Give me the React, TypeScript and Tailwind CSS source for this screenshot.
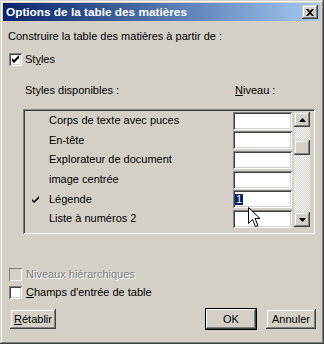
const raised =
  "shadow-[inset_-1px_-1px_0_#404040,inset_1px_1px_0_#d4d0c8,inset_-2px_-2px_0_#808080,inset_2px_2px_0_#ffffff]";
const sunken =
  "shadow-[inset_1px_1px_0_#808080,inset_-1px_-1px_0_#ffffff,inset_2px_2px_0_#404040,inset_-2px_-2px_0_#d4d0c8]";

const styles = [
  { name: "Corps de texte avec puces" },
  { name: "En-tête" },
  { name: "Explorateur de document" },
  { name: "image centrée" },
  { name: "Légende", used: true, level: "1" },
  { name: "Liste à numéros 2" },
];

function CheckBox({ checked, disabled }: { checked?: boolean; disabled?: boolean }) {
  return (
    <div
      className={`w-[13px] h-[13px] shrink-0 ${
        disabled
          ? "bg-[#d4d0c8] shadow-[inset_1px_1px_0_#808080,inset_-1px_-1px_0_#ffffff]"
          : "bg-white " + sunken
      }`}
    >
      {checked && (
        <svg width="13" height="13" viewBox="0 0 13 13">
          <path d="M3 5 L5 7 L10 2 L10 5 L5 10 L3 8 Z" fill="#000" />
        </svg>
      )}
    </div>
  );
}

function Arrow({ up }: { up?: boolean }) {
  return (
    <div className={`w-[16px] h-[15px] bg-[#d4d0c8] flex items-center justify-center ${raised}`}>
      <svg width="7" height="4" viewBox="0 0 7 4">
        {up ? <path d="M3.5 0 L7 4 L0 4 Z" fill="#000" /> : <path d="M0 0 L7 0 L3.5 4 Z" fill="#000" />}
      </svg>
    </div>
  );
}

export default function App() {
  return (
    <div
      className={`relative w-[324px] h-[344px] bg-[#d4d0c8] pt-[3px] pl-[3px] pr-[4px] font-['Liberation_Sans',Arial,sans-serif] text-[11px] leading-[13px] text-black select-none ${raised}`}
    >
      {/* title bar */}
      <div className="h-[18px] flex items-center pl-[3px] bg-gradient-to-r from-[#0a246a] to-[#a6caf0]">
        <span className="text-white font-bold text-[11.8px]">Options de la table des matières</span>
        <div className={`ml-auto mr-[2px] w-[16px] h-[14px] bg-[#d4d0c8] flex items-center justify-center ${raised}`}>
          <svg width="8" height="7" viewBox="0 0 8 7">
            <path d="M0 0 H2 L4 2 L6 0 H8 L5 3.5 L8 7 H6 L4 5 L2 7 H0 L3 3.5 Z" fill="#000" />
          </svg>
        </div>
      </div>

      <div className="ml-[5px] w-[308px]">
        <div className="mt-[8.5px]">Construire la table des matières à partir de :</div>

        <div className="mt-[10.5px] ml-[1px] flex items-center gap-[3px] h-[13px]">
          <CheckBox checked />
          <span>
            St<span className="underline">y</span>les
          </span>
        </div>

        <div className="mt-[17.5px] flex">
          <span className="ml-[17px] w-[210px]">Styles disponibles :</span>
          <span>
            <span className="underline">N</span>iveau :
          </span>
        </div>

        {/* list */}
        <div className={`mt-[12.5px] ml-[15px] w-[292px] h-[125px] p-[2px] flex ${sunken}`}>
          <div className="flex-1 flex flex-col">
            {styles.map((s) => (
              <div key={s.name} className="h-[19.6px] flex items-center">
                <div className="w-[24px] pl-[7px]">
                  {s.used && (
                    <svg width="8" height="7" viewBox="0 0 8 7">
                      <path d="M0 3 L2 5 L7 0 L7 2.5 L2 7 L0 5 Z" fill="#000" />
                    </svg>
                  )}
                </div>
                <span className="flex-1">{s.name}</span>
                <div className={`w-[59px] h-[18px] bg-white flex items-center pl-[2px] ${sunken}`}>
                  {s.level && (
                    <span className="bg-[#0a246a] text-white h-[11px] leading-[11px] px-[1px]">{s.level}</span>
                  )}
                </div>
              </div>
            ))}
          </div>
          <div className="ml-[2px] mr-[3px] mt-[1px] w-[16px] h-[115px] flex flex-col bg-[image:repeating-conic-gradient(#d4d0c8_0%_25%,#ffffff_0%_50%)] bg-[length:2px_2px]">
            <Arrow up />
            <div className={`mt-[13px] w-[16px] h-[15px] bg-[#d4d0c8] ${raised}`} />
            <div className="flex-1" />
            <Arrow />
          </div>
        </div>

        <div className="mt-[34px] ml-[1px] flex items-center gap-[4px] h-[13px]">
          <CheckBox disabled />
          <span className="text-[#808080] [text-shadow:1px_1px_0_#ffffff]">Niveaux hiérarchiques</span>
        </div>
        <div className="mt-[5px] ml-[1px] flex items-center gap-[4px] h-[13px]">
          <CheckBox />
          <span>
            <span className="underline">C</span>hamps d'entrée de table
          </span>
        </div>

        <div className="mt-[9px] flex items-center h-[22px]">
          <button className={`ml-[2px] w-[46px] h-[20px] bg-[#d4d0c8] ${raised}`}>
            <span className="underline">R</span>établir
          </button>
          <button
            className={`ml-auto w-[52px] h-[22px] bg-[#d4d0c8] border border-black shadow-[inset_-1px_-1px_0_#404040,inset_1px_1px_0_#ffffff,inset_-2px_-2px_0_#808080]`}
          >
            OK
          </button>
          <button className={`ml-[9px] w-[50px] h-[20px] bg-[#d4d0c8] ${raised}`}>Annuler</button>
        </div>
      </div>

      {/* mouse pointer */}
      <svg className="absolute left-[247px] top-[206px]" width="14" height="22" viewBox="0 0 14 22">
        <path d="M1.5 1.5 L1.5 17.5 L5.5 13.5 L8.5 20.5 L11 19.5 L8 12.5 L13 12.5 Z" fill="#fff" stroke="#000" strokeWidth="1" />
      </svg>
    </div>
  );
}
